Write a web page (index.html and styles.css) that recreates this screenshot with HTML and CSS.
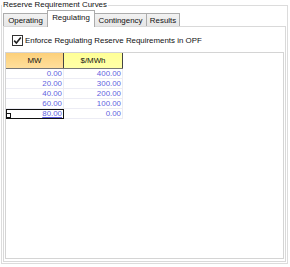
FILE: index.html
```html
<!DOCTYPE html>
<html lang="en">
<head>
    <meta charset="UTF-8">
    <title>Reserve Requirement Curves</title>
    <link rel="stylesheet" href="styles.css">
</head>
<body>
    <div class="group">
        <div class="group-title">Reserve Requirement Curves</div>
        <div class="tabs">
            <div class="tab">Operating</div>
            <div class="tab active">Regulating</div>
            <div class="tab">Contingency</div>
            <div class="tab">Results</div>
        </div>
        <div class="panel">
            <label class="check-row">
                <span class="checkbox">
                    <svg width="9" height="9" viewBox="0 0 9 9"><path d="M1.2 4.6 L3.4 7 L7.8 1.6" fill="none" stroke="#222" stroke-width="1.6"/></svg>
                </span>
                Enforce Regulating Reserve Requirements in OPF
            </label>
            <div class="grid">
                <table>
                    <thead>
                        <tr><th class="mw">MW</th><th class="price">$/MWh</th></tr>
                    </thead>
                    <tbody>
                        <tr><td>0.00</td><td>400.00</td></tr>
                        <tr><td>20.00</td><td>300.00</td></tr>
                        <tr><td>40.00</td><td>200.00</td></tr>
                        <tr><td>60.00</td><td>100.00</td></tr>
                        <tr><td class="current">80.00<span class="handle"></span></td><td>0.00</td></tr>
                    </tbody>
                </table>
            </div>
        </div>
    </div>
</body>
</html>
```

FILE: styles.css
```css
body {
    margin: 0;
    width: 290px;
    height: 267px;
    background: #fff;
    font-family: "Liberation Sans", Arial, sans-serif;
    font-size: 7.9px;
    color: #111;
    overflow: hidden;
}
.group {
    position: relative;
    margin: 5px 2px 2px 1px;
    height: 259px;
    border: 1px solid #dcdcdc;
    box-sizing: border-box;
    padding: 5px 1px 1px 1px;
    background: #fff;
    display: flex;
    flex-direction: column;
}
.group-title {
    position: absolute;
    top: -6px;
    left: 0;
    padding: 0 1px;
    background: #fff;
    line-height: 10px;
}
.tabs {
    display: flex;
    align-items: flex-end;
    height: 15px;
    position: relative;
    z-index: 1;
}
.tab {
    height: 13px;
    line-height: 13px;
    padding: 0;
    text-align: center;
    border: 1px solid #acacac;
    border-bottom: none;
    box-sizing: border-box;
    background: linear-gradient(#f2f2f2, #e6e6e6);
    margin-right: -1px;
    white-space: nowrap;
}
.tab:first-child { width: 45px; }
.tab.active {
    height: 17px;
    line-height: 14px;
    background: #fff;
    width: 48px;
    margin-bottom: -1px;
    position: relative;
    z-index: 2;
}
.tab:nth-child(3) { width: 53px; }
.tab:nth-child(4) { width: 34px; }
.panel {
    flex: 1;
    border: 1px solid #d9d9d9;
    background: #fff;
    padding: 8px 1px 2px 1px;
    display: flex;
    flex-direction: column;
}
.check-row {
    display: flex;
    align-items: center;
    gap: 2px;
    padding-left: 7px;
    height: 10px;
}
.checkbox {
    width: 9px;
    height: 9px;
    border: 1px solid #333;
    background: #fff;
    display: flex;
    align-items: center;
    justify-content: center;
}
.grid {
    flex: 1;
    margin-top: 7px;
    border: 1px solid #d4d4d4;
    background: #fff;
}
table {
    border-collapse: collapse;
}
th {
    height: 15px;
    padding: 0;
    font-weight: normal;
    border-right: 1px solid #444;
    border-bottom: 1px solid #777;
    text-align: center;
}
th.mw { width: 57px; background: linear-gradient(#fcd07a, #ffdf9c); }
th.price { width: 58px; background: linear-gradient(#ffff96, #ffffa8); }
td {
    height: 9px;
    padding: 0 1px 0 0;
    line-height: 9px;
    text-align: right;
    color: #5f5fe0;
    border-right: 1px solid #ececf4;
    border-bottom: 1px solid #ececf4;
}
td.current {
    position: relative;
    outline: 1px solid #111;
    outline-offset: -1px;
    text-decoration: underline;
}
.handle {
    position: absolute;
    left: 0;
    bottom: 0;
    width: 3px;
    height: 3px;
    border: 1px solid #111;
    background: #fff;
}
```
